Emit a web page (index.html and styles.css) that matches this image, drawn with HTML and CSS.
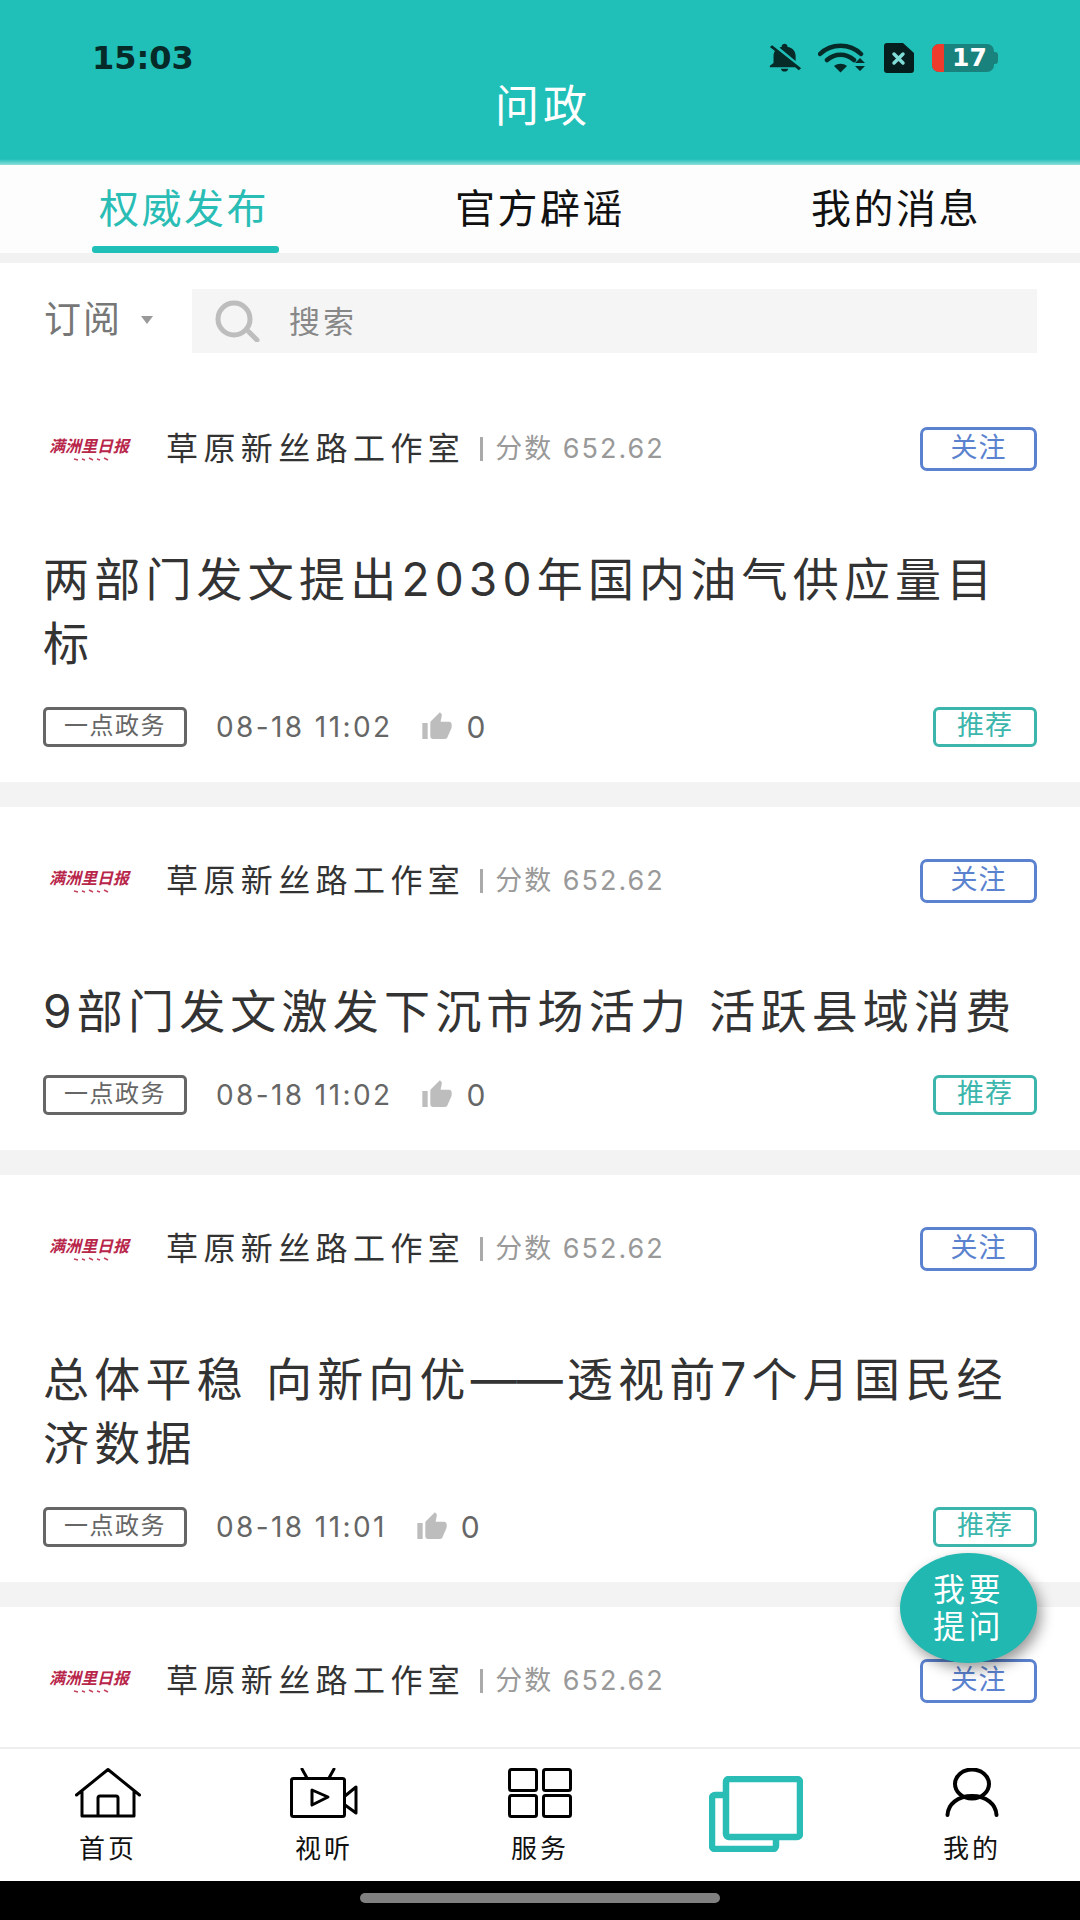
FILE: index.html
```html
<!DOCTYPE html>
<html lang="zh">
<head>
    <meta charset="UTF-8">
    <meta name="viewport" content="width=device-width, initial-scale=1.0">
    <title>问政</title>
    <link rel="stylesheet" href="styles.css">
</head>
<body>
    <div class="phone">
        <header class="top">
            <div class="status">
                <span class="time">15:03</span>
                <div class="status-icons">
                    <svg class="ic-bell" viewBox="3 2 19 21" preserveAspectRatio="none"><path d="M20 18.69L7.84 6.14 5.27 3.49 4 4.76l2.8 2.8v.01c-.52.99-.8 2.16-.8 3.42v5l-2 2v1h13.73l2 2L21 19.72l-1-1.03zM12 22c1.11 0 2-.89 2-2h-4c0 1.11.89 2 2 2zm6-7.32V11c0-3.08-1.64-5.64-4.5-6.32V4c0-.83-.67-1.5-1.5-1.5s-1.5.67-1.5 1.5v.68c-.15.03-.29.08-.42.12-.1.03-.2.07-.3.11h-.01c-.2.08-.4.17-.59.27-.01 0-.01 0-.02.01L18 14.68z"/></svg>
                    <svg class="ic-wifi" viewBox="0 0 50 30">
                        <path d="M2 11C13 0 32 0 43 11M9 17c8-7 19-7 27 0" fill="none" stroke="#062a28" stroke-width="4.5" stroke-linecap="round"/>
                        <path d="M16 23c4-3 9-3 13 0l-6.500 6.500z" fill="#062a28"/>
                        <path d="M37 20l5-5 5 5zM37 23l5 5 5-5z" fill="#062a28"/>
                    </svg>
                    <svg class="ic-sim" viewBox="0 0 30 30">
                        <path d="M3 0h16l11 10v17a3 3 0 0 1-3 3H3a3 3 0 0 1-3-3V3a3 3 0 0 1 3-3z" fill="#051d1c"/>
                        <path d="M10 11l9 9M19 11l-9 9" stroke="#7fdcd6" stroke-width="3.500" stroke-linecap="round"/>
                    </svg>
                    <div class="battery">
                        <span class="battery-low"></span>
                        <span class="battery-num">17</span>
                    </div>
                </div>
            </div>
            <h1 class="title">问政</h1>
        </header>

        <nav class="tabs">
            <a class="tab active">权威发布</a>
            <a class="tab">官方辟谣</a>
            <a class="tab">我的消息</a>
        </nav>

        <main class="content">
            <div class="search-row">
                <div class="sub">订阅<i class="caret"></i></div>
                <div class="search">
                    <svg class="ic-search" viewBox="0 0 46 42"><circle cx="19" cy="19" r="16" fill="none" stroke="#bdbdbd" stroke-width="5"/><path d="M34 32l8 8" stroke="#bdbdbd" stroke-width="5" stroke-linecap="round"/></svg>
                    <span>搜索</span>
                </div>
            </div>

            <article class="card">
                <div class="card-head">
                    <div class="logo"><span>满洲里日报</span><svg viewBox="0 0 40 6"><path d="M1 3l4 1M9 3l3 1M16 2l4 2M24 3l3 1M31 2l4 2" stroke="#c4425c" stroke-width="1.500"/></svg></div>
                    <span class="name">草原新丝路工作室</span>
                    <span class="score">分数 652.62</span>
                    <a class="follow">关注</a>
                </div>
                <h2 class="card-title">两部门发文提出2030年国内油气供应量目标</h2>
                <div class="meta">
                    <span class="tag">一点政务</span>
                    <span class="date">08-18 11:02</span>
                    <svg class="ic-thumb" viewBox="0 0 24 24"><path d="M1 21h4V9H1v12zm22-11c0-1.100-.9-2-2-2h-6.310l.95-4.570.03-.32c0-.41-.17-.79-.44-1.060L14.170 1 7.590 7.590C7.220 7.950 7 8.450 7 9v10c0 1.100.9 2 2 2h9c.83 0 1.540-.5 1.840-1.220l3.020-7.050c.09-.23.14-.47.14-.73v-2z"/></svg>
                    <span class="count">0</span>
                    <a class="rec">推荐</a>
                </div>
            </article>

            <article class="card">
                <div class="card-head">
                    <div class="logo"><span>满洲里日报</span><svg viewBox="0 0 40 6"><path d="M1 3l4 1M9 3l3 1M16 2l4 2M24 3l3 1M31 2l4 2" stroke="#c4425c" stroke-width="1.500"/></svg></div>
                    <span class="name">草原新丝路工作室</span>
                    <span class="score">分数 652.62</span>
                    <a class="follow">关注</a>
                </div>
                <h2 class="card-title">9部门发文激发下沉市场活力 活跃县域消费</h2>
                <div class="meta">
                    <span class="tag">一点政务</span>
                    <span class="date">08-18 11:02</span>
                    <svg class="ic-thumb" viewBox="0 0 24 24"><path d="M1 21h4V9H1v12zm22-11c0-1.100-.9-2-2-2h-6.310l.95-4.570.03-.32c0-.41-.17-.79-.44-1.060L14.170 1 7.590 7.590C7.220 7.950 7 8.450 7 9v10c0 1.100.9 2 2 2h9c.83 0 1.540-.5 1.840-1.220l3.020-7.050c.09-.23.14-.47.14-.73v-2z"/></svg>
                    <span class="count">0</span>
                    <a class="rec">推荐</a>
                </div>
            </article>

            <article class="card">
                <div class="card-head">
                    <div class="logo"><span>满洲里日报</span><svg viewBox="0 0 40 6"><path d="M1 3l4 1M9 3l3 1M16 2l4 2M24 3l3 1M31 2l4 2" stroke="#c4425c" stroke-width="1.500"/></svg></div>
                    <span class="name">草原新丝路工作室</span>
                    <span class="score">分数 652.62</span>
                    <a class="follow">关注</a>
                </div>
                <h2 class="card-title">总体平稳 向新向优<span class="dash">——</span>透视前7个月国民经济数据</h2>
                <div class="meta">
                    <span class="tag">一点政务</span>
                    <span class="date">08-18 11:01</span>
                    <svg class="ic-thumb" viewBox="0 0 24 24"><path d="M1 21h4V9H1v12zm22-11c0-1.100-.9-2-2-2h-6.310l.95-4.570.03-.32c0-.41-.17-.79-.44-1.060L14.170 1 7.590 7.590C7.220 7.950 7 8.450 7 9v10c0 1.100.9 2 2 2h9c.83 0 1.540-.5 1.840-1.220l3.020-7.050c.09-.23.14-.47.14-.73v-2z"/></svg>
                    <span class="count">0</span>
                    <a class="rec">推荐</a>
                </div>
            </article>

            <article class="card">
                <div class="card-head">
                    <div class="logo"><span>满洲里日报</span><svg viewBox="0 0 40 6"><path d="M1 3l4 1M9 3l3 1M16 2l4 2M24 3l3 1M31 2l4 2" stroke="#c4425c" stroke-width="1.500"/></svg></div>
                    <span class="name">草原新丝路工作室</span>
                    <span class="score">分数 652.62</span>
                    <a class="follow">关注</a>
                </div>
            </article>

            <a class="ask">我要<br>提问</a>
        </main>

        <footer class="bottom">
            <a class="bottom-item">
                <svg class="ic-home" viewBox="0 0 66 50"><path d="M1.500 27L33 1.500 64.500 27M7 23v25h52V23M23 48V30a2 2 0 0 1 2-2h16a2 2 0 0 1 2 2v18" fill="none" stroke="#000" stroke-width="3" stroke-linejoin="round" stroke-linecap="round"/></svg>
                <span>首页</span>
            </a>
            <a class="bottom-item">
                <svg class="ic-video" viewBox="0 0 68 50"><path d="M12 1l5 9M44 1l-5 9" stroke="#000" stroke-width="3" stroke-linecap="round"/><rect x="1.500" y="10.500" width="53" height="38" rx="2" fill="none" stroke="#000" stroke-width="3"/><path d="M22 22l16 7-16 8z" fill="none" stroke="#000" stroke-width="3" stroke-linejoin="round"/><path d="M55 28l11-9v26l-11-8" fill="none" stroke="#000" stroke-width="3" stroke-linejoin="round"/></svg>
                <span>视听</span>
            </a>
            <a class="bottom-item">
                <svg class="ic-grid" viewBox="0 0 64 50"><rect x="1.500" y="1.500" width="27" height="21" rx="2" fill="none" stroke="#000" stroke-width="3"/><rect x="35.500" y="1.500" width="27" height="21" rx="2" fill="none" stroke="#000" stroke-width="3"/><rect x="1.500" y="27.500" width="27" height="21" rx="2" fill="none" stroke="#000" stroke-width="3"/><rect x="35.500" y="27.500" width="27" height="21" rx="2" fill="none" stroke="#000" stroke-width="3"/></svg>
                <span>服务</span>
            </a>
            <a class="bottom-item">
                <svg class="ic-stack" viewBox="0 0 94 76"><path d="M15 19H6a3 3 0 0 0-3 3v48a3 3 0 0 0 3 3h58a3 3 0 0 0 3-3v-9" fill="none" stroke="#2abdb6" stroke-width="6.500"/><rect x="17" y="3" width="74" height="58" rx="3" fill="none" stroke="#2abdb6" stroke-width="6.500"/></svg>
            </a>
            <a class="bottom-item">
                <svg class="ic-user" viewBox="0 0 54 50"><ellipse cx="27" cy="16" rx="17" ry="14.500" fill="none" stroke="#000" stroke-width="4"/><path d="M2.500 47C3 36 13 28 27 28s24 8 24.500 19" fill="none" stroke="#000" stroke-width="4" stroke-linecap="round"/></svg>
                <span>我的</span>
            </a>
        </footer>

        <div class="home-bar"><i></i></div>
    </div>
</body>
</html>
```

FILE: styles.css
```css
* {
    box-sizing: border-box;
}
html, body {
    margin: 0;
    padding: 0;
}
body {
    font-family: "Inter", "Noto Sans CJK SC", sans-serif;
    background-color: #fff;
}
a {
    display: block;
}
.phone {
    width: 1080px;
    height: 1920px;
    display: flex;
    flex-direction: column;
    overflow: hidden;
}

/* top bar */
.top {
    height: 165px;
    flex: none;
    padding-top: 40px;
    background: linear-gradient(to bottom, #20c0b8 0, #20c0b8 159px, #8fdfda 165px);
}
.status {
    height: 36px;
    padding: 0 82px 0 92px;
    display: flex;
    justify-content: space-between;
    align-items: center;
}
.time {
    font-family: "DejaVu Sans", sans-serif;
    font-size: 32px;
    font-weight: 700;
    color: #062a28;
}
.status-icons {
    display: flex;
    align-items: center;
}
.ic-bell {
    width: 35px;
    height: 30px;
    fill: #062a28;
}
.ic-wifi {
    width: 50px;
    height: 30px;
    margin-left: 15px;
}
.ic-sim {
    width: 30px;
    height: 30px;
    margin-left: 16px;
}
.battery {
    width: 62px;
    height: 28px;
    margin: 0 4px 0 18px;
    position: relative;
    border-radius: 7px;
    background-color: #1a827c;
    display: flex;
}
.battery::after {
    content: "";
    position: absolute;
    right: -4px;
    top: 8px;
    width: 4px;
    height: 12px;
    border-radius: 0 3px 3px 0;
    background-color: #1a827c;
}
.battery-low {
    width: 12px;
    border-radius: 7px 0 0 7px;
    background-color: #ee3b2c;
}
.battery-num {
    margin-left: 8px;
    font-family: "DejaVu Sans", sans-serif;
    font-size: 25px;
    font-weight: 700;
    line-height: 28px;
    color: #fff;
}
.title {
    margin: 8px 0 0;
    padding-left: 6px;
    text-align: center;
    font-size: 44px;
    font-weight: 400;
    line-height: 44px;
    letter-spacing: 4px;
    color: #fff;
}

/* tabs */
.tabs {
    height: 88px;
    flex: none;
    padding: 0 6px;
    display: flex;
    background-color: #fdfdfd;
}
.tab {
    width: 356px;
    padding-top: 20px;
    position: relative;
    text-align: center;
    font-size: 40px;
    line-height: 48px;
    letter-spacing: 2.500px;
    color: #111;
}
.tab.active {
    color: #2abdb6;
}
.tab.active::after {
    content: "";
    position: absolute;
    left: 86px;
    bottom: 0;
    width: 187px;
    height: 7px;
    border-radius: 3px;
    background-color: #20c0b8;
}

/* list */
.content {
    flex: 1;
    position: relative;
    overflow: hidden;
    border-top: 10px solid #f2f2f2;
}
.search-row {
    height: 112px;
    padding: 26px 43px 0 44px;
    display: flex;
    align-items: flex-start;
}
.sub {
    width: 148px;
    flex: none;
    font-size: 37px;
    line-height: 62px;
    letter-spacing: 2px;
    color: #777;
    display: flex;
    align-items: center;
}
.caret {
    margin-left: 19px;
    border-style: solid;
    border-width: 8px 6px 0;
    border-color: #999 transparent transparent;
}
.search {
    flex: 1;
    height: 64px;
    padding: 0 0 4px 23px;
    background-color: #f5f5f5;
    display: flex;
    align-items: center;
    font-size: 31px;
    letter-spacing: 3px;
    color: #888;
}
.ic-search {
    width: 46px;
    height: 42px;
    margin: 4px 28px 0 0;
}
.card {
    padding: 52px 43px 35px;
    border-bottom: 25px solid #f3f3f3;
}
.card:last-of-type {
    border-bottom: none;
}
.card-head {
    height: 44px;
    display: flex;
    align-items: center;
}
.logo {
    width: 123px;
    flex: none;
    padding-left: 6px;
}
.logo span {
    display: block;
    font-size: 16px;
    font-weight: 700;
    line-height: 18px;
    font-style: italic;
    white-space: nowrap;
    color: #b8264a;
}
.logo svg {
    display: block;
    width: 40px;
    height: 6px;
    margin: 1px 0 0 24px;
}
.name {
    margin-bottom: 6px;
    font-size: 32px;
    letter-spacing: 5.400px;
    color: #333;
    white-space: nowrap;
}
.score {
    margin-left: 15px;
    padding-left: 12px;
    font-size: 27px;
    line-height: 24px;
    letter-spacing: 2px;
    color: #999;
    border-left: 3px solid #aaa;
    white-space: nowrap;
}
.follow {
    margin-left: auto;
    width: 117px;
    height: 44px;
    border: 3px solid #5b82cf;
    border-radius: 7px;
    text-align: center;
    font-size: 27px;
    line-height: 36px;
    letter-spacing: 1px;
    color: #5b82cf;
}
.card-title {
    margin: 76px 0 32px;
    padding-right: 20px;
    font-size: 46px;
    font-weight: 400;
    line-height: 64px;
    letter-spacing: 5.200px;
    color: #333;
}
.dash {
    margin-right: 4px;
    letter-spacing: 0;
}
.meta {
    height: 40px;
    display: flex;
    align-items: center;
}
.tag {
    width: 144px;
    height: 40px;
    border: 3px solid #666;
    border-radius: 5px;
    text-align: center;
    font-size: 24px;
    line-height: 32px;
    letter-spacing: 1.500px;
    color: #666;
}
.date {
    margin-left: 29px;
    font-size: 28px;
    letter-spacing: 2.400px;
    color: #666;
}
.ic-thumb {
    width: 34px;
    height: 32px;
    margin-left: 28px;
    fill: #bdbdbd;
}
.count {
    margin-left: 12px;
    font-size: 30px;
    color: #666;
}
.rec {
    margin-left: auto;
    width: 104px;
    height: 40px;
    border: 3px solid #3cb6ac;
    border-radius: 6px;
    text-align: center;
    font-size: 27px;
    line-height: 32px;
    letter-spacing: 1px;
    color: #3cb6ac;
}
.ask {
    position: absolute;
    left: 900px;
    top: 1290px;
    width: 137px;
    height: 110px;
    padding-top: 18px;
    border-radius: 50%;
    background-color: #20b8b0;
    box-shadow: 4px 6px 14px rgba(0, 0, 0, 0.4);
    text-align: center;
    font-size: 32px;
    line-height: 37px;
    letter-spacing: 3.500px;
    color: #fff;
}

/* bottom nav */
.bottom {
    height: 134px;
    flex: none;
    display: flex;
    background-color: #fff;
    border-top: 2px solid #eee;
}
.bottom-item {
    width: 216px;
    padding-top: 19px;
    display: flex;
    flex-direction: column;
    align-items: center;
    font-size: 26px;
    letter-spacing: 3px;
    color: #111;
}
.bottom-item span {
    margin-top: 16px;
    line-height: 30px;
}
.ic-home {
    width: 66px;
    height: 50px;
}
.ic-video {
    width: 68px;
    height: 50px;
}
.ic-grid {
    width: 64px;
    height: 50px;
}
.ic-stack {
    width: 94px;
    height: 76px;
    margin-top: 8px;
}
.ic-user {
    width: 54px;
    height: 50px;
}
.home-bar {
    height: 39px;
    flex: none;
    padding-top: 12px;
    background-color: #000;
}
.home-bar i {
    display: block;
    width: 360px;
    height: 10px;
    margin: 0 auto;
    border-radius: 5px;
    background-color: #808080;
}
```
